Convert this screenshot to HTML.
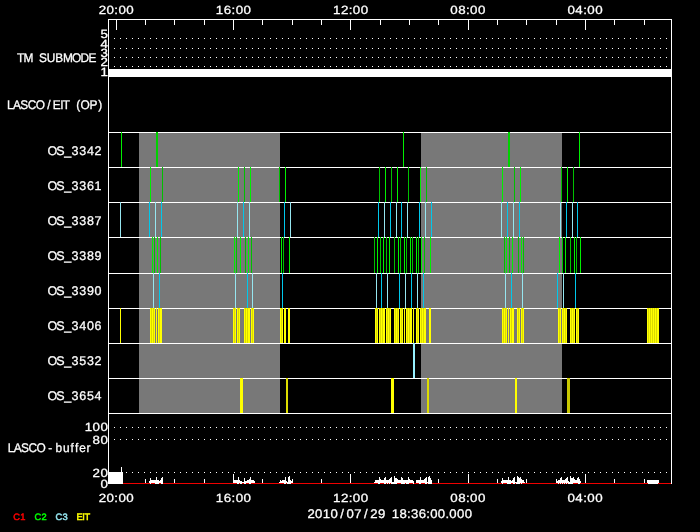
<!DOCTYPE html>
<html><head><meta charset="utf-8"><title>LASCO/EIT plan</title>
<style>
html,body{margin:0;padding:0;background:#000;}
svg{display:block;}
</style></head>
<body>
<svg width="700" height="532" viewBox="0 0 700 532" shape-rendering="crispEdges">
<rect x="0" y="0" width="700" height="532" fill="#000"/>
<rect x="139" y="132" width="141" height="281" fill="#787878"/>
<rect x="421" y="132" width="141" height="281" fill="#787878"/>
<rect x="108" y="132" width="564" height="1" fill="#fff"/>
<rect x="108" y="167" width="564" height="1" fill="#fff"/>
<rect x="108" y="202" width="564" height="1" fill="#fff"/>
<rect x="108" y="237" width="564" height="1" fill="#fff"/>
<rect x="108" y="273" width="564" height="1" fill="#fff"/>
<rect x="108" y="308" width="564" height="1" fill="#fff"/>
<rect x="108" y="343" width="564" height="1" fill="#fff"/>
<rect x="108" y="378" width="564" height="1" fill="#fff"/>
<rect x="108" y="413" width="564" height="1" fill="#fff"/>
<rect x="121" y="132" width="1" height="35" fill="#00f000"/>
<rect x="156" y="132" width="2" height="35" fill="#00d200"/>
<rect x="403" y="132" width="1" height="35" fill="#00f000"/>
<rect x="508" y="132" width="2" height="35" fill="#00d200"/>
<rect x="579" y="132" width="1" height="35" fill="#00f000"/>
<rect x="150" y="167" width="1" height="35" fill="#00f000"/>
<rect x="162" y="167" width="1" height="35" fill="#00c000"/>
<rect x="238" y="167" width="1" height="35" fill="#00f000"/>
<rect x="244" y="167" width="1" height="35" fill="#00c000"/>
<rect x="250" y="167" width="1" height="35" fill="#00f000"/>
<rect x="279" y="167" width="1" height="35" fill="#00c000"/>
<rect x="285" y="167" width="1" height="35" fill="#00f000"/>
<rect x="379" y="167" width="1" height="35" fill="#00c000"/>
<rect x="385" y="167" width="1" height="35" fill="#00f000"/>
<rect x="391" y="167" width="1" height="35" fill="#00c000"/>
<rect x="397" y="167" width="1" height="35" fill="#00f000"/>
<rect x="408" y="167" width="1" height="35" fill="#00c000"/>
<rect x="420" y="167" width="1" height="35" fill="#00f000"/>
<rect x="426" y="167" width="1" height="35" fill="#00c000"/>
<rect x="502" y="167" width="1" height="35" fill="#00f000"/>
<rect x="514" y="167" width="1" height="35" fill="#00c000"/>
<rect x="520" y="167" width="1" height="35" fill="#00f000"/>
<rect x="561" y="167" width="1" height="35" fill="#00c000"/>
<rect x="567" y="167" width="1" height="35" fill="#00f000"/>
<rect x="573" y="167" width="1" height="35" fill="#00c000"/>
<rect x="120" y="202" width="1" height="35" fill="#96e6f0"/>
<rect x="149" y="202" width="1" height="35" fill="#00c8eb"/>
<rect x="155" y="202" width="1" height="35" fill="#96e6f0"/>
<rect x="161" y="202" width="1" height="35" fill="#00c8eb"/>
<rect x="237" y="202" width="1" height="35" fill="#96e6f0"/>
<rect x="243" y="202" width="1" height="35" fill="#00c8eb"/>
<rect x="249" y="202" width="1" height="35" fill="#96e6f0"/>
<rect x="284" y="202" width="1" height="35" fill="#00c8eb"/>
<rect x="290" y="202" width="1" height="35" fill="#96e6f0"/>
<rect x="378" y="202" width="1" height="35" fill="#00c8eb"/>
<rect x="384" y="202" width="1" height="35" fill="#96e6f0"/>
<rect x="390" y="202" width="1" height="35" fill="#00c8eb"/>
<rect x="396" y="202" width="1" height="35" fill="#96e6f0"/>
<rect x="401" y="202" width="1" height="35" fill="#00c8eb"/>
<rect x="407" y="202" width="1" height="35" fill="#96e6f0"/>
<rect x="419" y="202" width="1" height="35" fill="#00c8eb"/>
<rect x="425" y="202" width="1" height="35" fill="#96e6f0"/>
<rect x="431" y="202" width="1" height="35" fill="#00c8eb"/>
<rect x="501" y="202" width="1" height="35" fill="#96e6f0"/>
<rect x="507" y="202" width="1" height="35" fill="#00c8eb"/>
<rect x="513" y="202" width="1" height="35" fill="#96e6f0"/>
<rect x="519" y="202" width="1" height="35" fill="#00c8eb"/>
<rect x="560" y="202" width="1" height="35" fill="#96e6f0"/>
<rect x="566" y="202" width="1" height="35" fill="#00c8eb"/>
<rect x="572" y="202" width="1" height="35" fill="#96e6f0"/>
<rect x="577" y="202" width="1" height="35" fill="#00c8eb"/>
<rect x="152" y="237" width="1" height="36" fill="#00f000"/>
<rect x="154" y="237" width="1" height="36" fill="#00c000"/>
<rect x="157" y="237" width="1" height="36" fill="#00f000"/>
<rect x="160" y="237" width="1" height="36" fill="#00c000"/>
<rect x="234" y="237" width="1" height="36" fill="#00f000"/>
<rect x="236" y="237" width="1" height="36" fill="#00c000"/>
<rect x="240" y="237" width="1" height="36" fill="#00f000"/>
<rect x="245" y="237" width="1" height="36" fill="#00c000"/>
<rect x="248" y="237" width="1" height="36" fill="#00f000"/>
<rect x="251" y="237" width="1" height="36" fill="#00c000"/>
<rect x="281" y="237" width="1" height="36" fill="#00f000"/>
<rect x="283" y="237" width="1" height="36" fill="#00c000"/>
<rect x="289" y="237" width="1" height="36" fill="#00f000"/>
<rect x="374" y="237" width="1" height="36" fill="#00c000"/>
<rect x="377" y="237" width="1" height="36" fill="#00f000"/>
<rect x="380" y="237" width="1" height="36" fill="#00c000"/>
<rect x="383" y="237" width="1" height="36" fill="#00f000"/>
<rect x="386" y="237" width="1" height="36" fill="#00c000"/>
<rect x="389" y="237" width="1" height="36" fill="#00f000"/>
<rect x="394" y="237" width="1" height="36" fill="#00c000"/>
<rect x="398" y="237" width="1" height="36" fill="#00f000"/>
<rect x="400" y="237" width="1" height="36" fill="#00c000"/>
<rect x="404" y="237" width="1" height="36" fill="#00f000"/>
<rect x="406" y="237" width="1" height="36" fill="#00c000"/>
<rect x="410" y="237" width="1" height="36" fill="#00f000"/>
<rect x="412" y="237" width="1" height="36" fill="#00c000"/>
<rect x="416" y="237" width="1" height="36" fill="#00f000"/>
<rect x="418" y="237" width="1" height="36" fill="#00c000"/>
<rect x="421" y="237" width="1" height="36" fill="#00f000"/>
<rect x="424" y="237" width="1" height="36" fill="#00c000"/>
<rect x="430" y="237" width="1" height="36" fill="#00f000"/>
<rect x="504" y="237" width="1" height="36" fill="#00c000"/>
<rect x="506" y="237" width="1" height="36" fill="#00f000"/>
<rect x="509" y="237" width="1" height="36" fill="#00c000"/>
<rect x="512" y="237" width="1" height="36" fill="#00f000"/>
<rect x="518" y="237" width="1" height="36" fill="#00c000"/>
<rect x="521" y="237" width="1" height="36" fill="#00f000"/>
<rect x="523" y="237" width="1" height="36" fill="#00c000"/>
<rect x="559" y="237" width="1" height="36" fill="#00f000"/>
<rect x="562" y="237" width="1" height="36" fill="#00c000"/>
<rect x="565" y="237" width="1" height="36" fill="#00f000"/>
<rect x="570" y="237" width="1" height="36" fill="#00c000"/>
<rect x="574" y="237" width="1" height="36" fill="#00f000"/>
<rect x="576" y="237" width="1" height="36" fill="#00c000"/>
<rect x="580" y="237" width="1" height="36" fill="#00f000"/>
<rect x="153" y="273" width="1" height="35" fill="#96e6f0"/>
<rect x="159" y="273" width="1" height="35" fill="#00c8eb"/>
<rect x="235" y="273" width="1" height="35" fill="#96e6f0"/>
<rect x="247" y="273" width="1" height="35" fill="#00c8eb"/>
<rect x="252" y="273" width="1" height="35" fill="#96e6f0"/>
<rect x="282" y="273" width="1" height="35" fill="#00c8eb"/>
<rect x="376" y="273" width="1" height="35" fill="#96e6f0"/>
<rect x="381" y="273" width="1" height="35" fill="#00c8eb"/>
<rect x="387" y="273" width="1" height="35" fill="#96e6f0"/>
<rect x="399" y="273" width="1" height="35" fill="#00c8eb"/>
<rect x="405" y="273" width="1" height="35" fill="#96e6f0"/>
<rect x="411" y="273" width="1" height="35" fill="#00c8eb"/>
<rect x="417" y="273" width="1" height="35" fill="#96e6f0"/>
<rect x="423" y="273" width="1" height="35" fill="#00c8eb"/>
<rect x="505" y="273" width="1" height="35" fill="#96e6f0"/>
<rect x="511" y="273" width="1" height="35" fill="#00c8eb"/>
<rect x="522" y="273" width="1" height="35" fill="#96e6f0"/>
<rect x="557" y="273" width="1" height="35" fill="#00c8eb"/>
<rect x="563" y="273" width="1" height="35" fill="#96e6f0"/>
<rect x="575" y="273" width="1" height="35" fill="#00c8eb"/>
<rect x="120" y="308" width="1" height="35" fill="#ffff00"/>
<rect x="150" y="308" width="5" height="35" fill="#ffff00"/>
<rect x="151" y="308" width="1" height="35" fill="#dada00"/>
<rect x="153" y="308" width="1" height="35" fill="#dada00"/>
<rect x="156" y="308" width="1" height="35" fill="#ffff00"/>
<rect x="158" y="308" width="4" height="35" fill="#ffff00"/>
<rect x="159" y="308" width="1" height="35" fill="#dada00"/>
<rect x="233" y="308" width="3" height="35" fill="#ffff00"/>
<rect x="234" y="308" width="1" height="35" fill="#dada00"/>
<rect x="237" y="308" width="3" height="35" fill="#ffff00"/>
<rect x="238" y="308" width="1" height="35" fill="#dada00"/>
<rect x="244" y="308" width="6" height="35" fill="#ffff00"/>
<rect x="245" y="308" width="1" height="35" fill="#dada00"/>
<rect x="247" y="308" width="1" height="35" fill="#dada00"/>
<rect x="251" y="308" width="3" height="35" fill="#ffff00"/>
<rect x="252" y="308" width="1" height="35" fill="#dada00"/>
<rect x="280" y="308" width="3" height="35" fill="#ffff00"/>
<rect x="281" y="308" width="1" height="35" fill="#dada00"/>
<rect x="284" y="308" width="2" height="35" fill="#ffff00"/>
<rect x="288" y="308" width="2" height="35" fill="#ffff00"/>
<rect x="375" y="308" width="3" height="35" fill="#ffff00"/>
<rect x="376" y="308" width="1" height="35" fill="#dada00"/>
<rect x="379" y="308" width="6" height="35" fill="#ffff00"/>
<rect x="380" y="308" width="1" height="35" fill="#dada00"/>
<rect x="382" y="308" width="1" height="35" fill="#dada00"/>
<rect x="386" y="308" width="5" height="35" fill="#ffff00"/>
<rect x="387" y="308" width="1" height="35" fill="#dada00"/>
<rect x="389" y="308" width="1" height="35" fill="#dada00"/>
<rect x="394" y="308" width="5" height="35" fill="#ffff00"/>
<rect x="395" y="308" width="1" height="35" fill="#dada00"/>
<rect x="397" y="308" width="1" height="35" fill="#dada00"/>
<rect x="400" y="308" width="3" height="35" fill="#ffff00"/>
<rect x="401" y="308" width="1" height="35" fill="#dada00"/>
<rect x="404" y="308" width="1" height="35" fill="#ffff00"/>
<rect x="406" y="308" width="6" height="35" fill="#ffff00"/>
<rect x="407" y="308" width="1" height="35" fill="#dada00"/>
<rect x="409" y="308" width="1" height="35" fill="#dada00"/>
<rect x="413" y="308" width="1" height="35" fill="#ffff00"/>
<rect x="416" y="308" width="3" height="35" fill="#ffff00"/>
<rect x="417" y="308" width="1" height="35" fill="#dada00"/>
<rect x="420" y="308" width="6" height="35" fill="#ffff00"/>
<rect x="421" y="308" width="1" height="35" fill="#dada00"/>
<rect x="423" y="308" width="1" height="35" fill="#dada00"/>
<rect x="429" y="308" width="2" height="35" fill="#ffff00"/>
<rect x="502" y="308" width="5" height="35" fill="#ffff00"/>
<rect x="503" y="308" width="1" height="35" fill="#dada00"/>
<rect x="505" y="308" width="1" height="35" fill="#dada00"/>
<rect x="508" y="308" width="1" height="35" fill="#ffff00"/>
<rect x="510" y="308" width="4" height="35" fill="#ffff00"/>
<rect x="511" y="308" width="1" height="35" fill="#dada00"/>
<rect x="517" y="308" width="3" height="35" fill="#ffff00"/>
<rect x="518" y="308" width="1" height="35" fill="#dada00"/>
<rect x="521" y="308" width="3" height="35" fill="#ffff00"/>
<rect x="522" y="308" width="1" height="35" fill="#dada00"/>
<rect x="558" y="308" width="3" height="35" fill="#ffff00"/>
<rect x="559" y="308" width="1" height="35" fill="#dada00"/>
<rect x="562" y="308" width="5" height="35" fill="#ffff00"/>
<rect x="563" y="308" width="1" height="35" fill="#dada00"/>
<rect x="565" y="308" width="1" height="35" fill="#dada00"/>
<rect x="570" y="308" width="5" height="35" fill="#ffff00"/>
<rect x="571" y="308" width="1" height="35" fill="#dada00"/>
<rect x="573" y="308" width="1" height="35" fill="#dada00"/>
<rect x="576" y="308" width="3" height="35" fill="#ffff00"/>
<rect x="577" y="308" width="1" height="35" fill="#dada00"/>
<rect x="647" y="308" width="12" height="35" fill="#ffff00"/>
<rect x="648" y="308" width="1" height="35" fill="#dada00"/>
<rect x="650" y="308" width="1" height="35" fill="#dada00"/>
<rect x="652" y="308" width="1" height="35" fill="#dada00"/>
<rect x="654" y="308" width="1" height="35" fill="#dada00"/>
<rect x="656" y="308" width="1" height="35" fill="#dada00"/>
<rect x="413" y="343" width="2" height="35" fill="#96f0ff"/>
<rect x="240" y="378" width="3" height="35" fill="#ffff00"/>
<rect x="286" y="378" width="2" height="35" fill="#dcdc00"/>
<rect x="391" y="378" width="3" height="35" fill="#ffff00"/>
<rect x="427" y="378" width="2" height="35" fill="#dcdc00"/>
<rect x="515" y="378" width="2" height="35" fill="#ffff00"/>
<rect x="567" y="378" width="3" height="35" fill="#c8c800"/>
<rect x="114" y="38" width="1" height="1" fill="#fff"/>
<rect x="120" y="38" width="1" height="1" fill="#fff"/>
<rect x="126" y="38" width="1" height="1" fill="#fff"/>
<rect x="132" y="38" width="1" height="1" fill="#fff"/>
<rect x="138" y="38" width="1" height="1" fill="#fff"/>
<rect x="144" y="38" width="1" height="1" fill="#fff"/>
<rect x="150" y="38" width="1" height="1" fill="#fff"/>
<rect x="156" y="38" width="1" height="1" fill="#fff"/>
<rect x="162" y="38" width="1" height="1" fill="#fff"/>
<rect x="168" y="38" width="1" height="1" fill="#fff"/>
<rect x="174" y="38" width="1" height="1" fill="#fff"/>
<rect x="180" y="38" width="1" height="1" fill="#fff"/>
<rect x="186" y="38" width="1" height="1" fill="#fff"/>
<rect x="192" y="38" width="1" height="1" fill="#fff"/>
<rect x="198" y="38" width="1" height="1" fill="#fff"/>
<rect x="204" y="38" width="1" height="1" fill="#fff"/>
<rect x="210" y="38" width="1" height="1" fill="#fff"/>
<rect x="216" y="38" width="1" height="1" fill="#fff"/>
<rect x="222" y="38" width="1" height="1" fill="#fff"/>
<rect x="228" y="38" width="1" height="1" fill="#fff"/>
<rect x="234" y="38" width="1" height="1" fill="#fff"/>
<rect x="240" y="38" width="1" height="1" fill="#fff"/>
<rect x="246" y="38" width="1" height="1" fill="#fff"/>
<rect x="252" y="38" width="1" height="1" fill="#fff"/>
<rect x="258" y="38" width="1" height="1" fill="#fff"/>
<rect x="264" y="38" width="1" height="1" fill="#fff"/>
<rect x="270" y="38" width="1" height="1" fill="#fff"/>
<rect x="276" y="38" width="1" height="1" fill="#fff"/>
<rect x="282" y="38" width="1" height="1" fill="#fff"/>
<rect x="288" y="38" width="1" height="1" fill="#fff"/>
<rect x="294" y="38" width="1" height="1" fill="#fff"/>
<rect x="300" y="38" width="1" height="1" fill="#fff"/>
<rect x="306" y="38" width="1" height="1" fill="#fff"/>
<rect x="312" y="38" width="1" height="1" fill="#fff"/>
<rect x="318" y="38" width="1" height="1" fill="#fff"/>
<rect x="324" y="38" width="1" height="1" fill="#fff"/>
<rect x="330" y="38" width="1" height="1" fill="#fff"/>
<rect x="336" y="38" width="1" height="1" fill="#fff"/>
<rect x="342" y="38" width="1" height="1" fill="#fff"/>
<rect x="348" y="38" width="1" height="1" fill="#fff"/>
<rect x="354" y="38" width="1" height="1" fill="#fff"/>
<rect x="360" y="38" width="1" height="1" fill="#fff"/>
<rect x="366" y="38" width="1" height="1" fill="#fff"/>
<rect x="372" y="38" width="1" height="1" fill="#fff"/>
<rect x="378" y="38" width="1" height="1" fill="#fff"/>
<rect x="384" y="38" width="1" height="1" fill="#fff"/>
<rect x="390" y="38" width="1" height="1" fill="#fff"/>
<rect x="396" y="38" width="1" height="1" fill="#fff"/>
<rect x="402" y="38" width="1" height="1" fill="#fff"/>
<rect x="408" y="38" width="1" height="1" fill="#fff"/>
<rect x="414" y="38" width="1" height="1" fill="#fff"/>
<rect x="420" y="38" width="1" height="1" fill="#fff"/>
<rect x="426" y="38" width="1" height="1" fill="#fff"/>
<rect x="432" y="38" width="1" height="1" fill="#fff"/>
<rect x="438" y="38" width="1" height="1" fill="#fff"/>
<rect x="444" y="38" width="1" height="1" fill="#fff"/>
<rect x="450" y="38" width="1" height="1" fill="#fff"/>
<rect x="456" y="38" width="1" height="1" fill="#fff"/>
<rect x="462" y="38" width="1" height="1" fill="#fff"/>
<rect x="468" y="38" width="1" height="1" fill="#fff"/>
<rect x="474" y="38" width="1" height="1" fill="#fff"/>
<rect x="480" y="38" width="1" height="1" fill="#fff"/>
<rect x="486" y="38" width="1" height="1" fill="#fff"/>
<rect x="492" y="38" width="1" height="1" fill="#fff"/>
<rect x="498" y="38" width="1" height="1" fill="#fff"/>
<rect x="504" y="38" width="1" height="1" fill="#fff"/>
<rect x="510" y="38" width="1" height="1" fill="#fff"/>
<rect x="516" y="38" width="1" height="1" fill="#fff"/>
<rect x="522" y="38" width="1" height="1" fill="#fff"/>
<rect x="528" y="38" width="1" height="1" fill="#fff"/>
<rect x="534" y="38" width="1" height="1" fill="#fff"/>
<rect x="540" y="38" width="1" height="1" fill="#fff"/>
<rect x="546" y="38" width="1" height="1" fill="#fff"/>
<rect x="552" y="38" width="1" height="1" fill="#fff"/>
<rect x="558" y="38" width="1" height="1" fill="#fff"/>
<rect x="564" y="38" width="1" height="1" fill="#fff"/>
<rect x="570" y="38" width="1" height="1" fill="#fff"/>
<rect x="576" y="38" width="1" height="1" fill="#fff"/>
<rect x="582" y="38" width="1" height="1" fill="#fff"/>
<rect x="588" y="38" width="1" height="1" fill="#fff"/>
<rect x="594" y="38" width="1" height="1" fill="#fff"/>
<rect x="600" y="38" width="1" height="1" fill="#fff"/>
<rect x="606" y="38" width="1" height="1" fill="#fff"/>
<rect x="612" y="38" width="1" height="1" fill="#fff"/>
<rect x="618" y="38" width="1" height="1" fill="#fff"/>
<rect x="624" y="38" width="1" height="1" fill="#fff"/>
<rect x="630" y="38" width="1" height="1" fill="#fff"/>
<rect x="636" y="38" width="1" height="1" fill="#fff"/>
<rect x="642" y="38" width="1" height="1" fill="#fff"/>
<rect x="648" y="38" width="1" height="1" fill="#fff"/>
<rect x="654" y="38" width="1" height="1" fill="#fff"/>
<rect x="660" y="38" width="1" height="1" fill="#fff"/>
<rect x="666" y="38" width="1" height="1" fill="#fff"/>
<rect x="114" y="48" width="1" height="1" fill="#fff"/>
<rect x="120" y="48" width="1" height="1" fill="#fff"/>
<rect x="126" y="48" width="1" height="1" fill="#fff"/>
<rect x="132" y="48" width="1" height="1" fill="#fff"/>
<rect x="138" y="48" width="1" height="1" fill="#fff"/>
<rect x="144" y="48" width="1" height="1" fill="#fff"/>
<rect x="150" y="48" width="1" height="1" fill="#fff"/>
<rect x="156" y="48" width="1" height="1" fill="#fff"/>
<rect x="162" y="48" width="1" height="1" fill="#fff"/>
<rect x="168" y="48" width="1" height="1" fill="#fff"/>
<rect x="174" y="48" width="1" height="1" fill="#fff"/>
<rect x="180" y="48" width="1" height="1" fill="#fff"/>
<rect x="186" y="48" width="1" height="1" fill="#fff"/>
<rect x="192" y="48" width="1" height="1" fill="#fff"/>
<rect x="198" y="48" width="1" height="1" fill="#fff"/>
<rect x="204" y="48" width="1" height="1" fill="#fff"/>
<rect x="210" y="48" width="1" height="1" fill="#fff"/>
<rect x="216" y="48" width="1" height="1" fill="#fff"/>
<rect x="222" y="48" width="1" height="1" fill="#fff"/>
<rect x="228" y="48" width="1" height="1" fill="#fff"/>
<rect x="234" y="48" width="1" height="1" fill="#fff"/>
<rect x="240" y="48" width="1" height="1" fill="#fff"/>
<rect x="246" y="48" width="1" height="1" fill="#fff"/>
<rect x="252" y="48" width="1" height="1" fill="#fff"/>
<rect x="258" y="48" width="1" height="1" fill="#fff"/>
<rect x="264" y="48" width="1" height="1" fill="#fff"/>
<rect x="270" y="48" width="1" height="1" fill="#fff"/>
<rect x="276" y="48" width="1" height="1" fill="#fff"/>
<rect x="282" y="48" width="1" height="1" fill="#fff"/>
<rect x="288" y="48" width="1" height="1" fill="#fff"/>
<rect x="294" y="48" width="1" height="1" fill="#fff"/>
<rect x="300" y="48" width="1" height="1" fill="#fff"/>
<rect x="306" y="48" width="1" height="1" fill="#fff"/>
<rect x="312" y="48" width="1" height="1" fill="#fff"/>
<rect x="318" y="48" width="1" height="1" fill="#fff"/>
<rect x="324" y="48" width="1" height="1" fill="#fff"/>
<rect x="330" y="48" width="1" height="1" fill="#fff"/>
<rect x="336" y="48" width="1" height="1" fill="#fff"/>
<rect x="342" y="48" width="1" height="1" fill="#fff"/>
<rect x="348" y="48" width="1" height="1" fill="#fff"/>
<rect x="354" y="48" width="1" height="1" fill="#fff"/>
<rect x="360" y="48" width="1" height="1" fill="#fff"/>
<rect x="366" y="48" width="1" height="1" fill="#fff"/>
<rect x="372" y="48" width="1" height="1" fill="#fff"/>
<rect x="378" y="48" width="1" height="1" fill="#fff"/>
<rect x="384" y="48" width="1" height="1" fill="#fff"/>
<rect x="390" y="48" width="1" height="1" fill="#fff"/>
<rect x="396" y="48" width="1" height="1" fill="#fff"/>
<rect x="402" y="48" width="1" height="1" fill="#fff"/>
<rect x="408" y="48" width="1" height="1" fill="#fff"/>
<rect x="414" y="48" width="1" height="1" fill="#fff"/>
<rect x="420" y="48" width="1" height="1" fill="#fff"/>
<rect x="426" y="48" width="1" height="1" fill="#fff"/>
<rect x="432" y="48" width="1" height="1" fill="#fff"/>
<rect x="438" y="48" width="1" height="1" fill="#fff"/>
<rect x="444" y="48" width="1" height="1" fill="#fff"/>
<rect x="450" y="48" width="1" height="1" fill="#fff"/>
<rect x="456" y="48" width="1" height="1" fill="#fff"/>
<rect x="462" y="48" width="1" height="1" fill="#fff"/>
<rect x="468" y="48" width="1" height="1" fill="#fff"/>
<rect x="474" y="48" width="1" height="1" fill="#fff"/>
<rect x="480" y="48" width="1" height="1" fill="#fff"/>
<rect x="486" y="48" width="1" height="1" fill="#fff"/>
<rect x="492" y="48" width="1" height="1" fill="#fff"/>
<rect x="498" y="48" width="1" height="1" fill="#fff"/>
<rect x="504" y="48" width="1" height="1" fill="#fff"/>
<rect x="510" y="48" width="1" height="1" fill="#fff"/>
<rect x="516" y="48" width="1" height="1" fill="#fff"/>
<rect x="522" y="48" width="1" height="1" fill="#fff"/>
<rect x="528" y="48" width="1" height="1" fill="#fff"/>
<rect x="534" y="48" width="1" height="1" fill="#fff"/>
<rect x="540" y="48" width="1" height="1" fill="#fff"/>
<rect x="546" y="48" width="1" height="1" fill="#fff"/>
<rect x="552" y="48" width="1" height="1" fill="#fff"/>
<rect x="558" y="48" width="1" height="1" fill="#fff"/>
<rect x="564" y="48" width="1" height="1" fill="#fff"/>
<rect x="570" y="48" width="1" height="1" fill="#fff"/>
<rect x="576" y="48" width="1" height="1" fill="#fff"/>
<rect x="582" y="48" width="1" height="1" fill="#fff"/>
<rect x="588" y="48" width="1" height="1" fill="#fff"/>
<rect x="594" y="48" width="1" height="1" fill="#fff"/>
<rect x="600" y="48" width="1" height="1" fill="#fff"/>
<rect x="606" y="48" width="1" height="1" fill="#fff"/>
<rect x="612" y="48" width="1" height="1" fill="#fff"/>
<rect x="618" y="48" width="1" height="1" fill="#fff"/>
<rect x="624" y="48" width="1" height="1" fill="#fff"/>
<rect x="630" y="48" width="1" height="1" fill="#fff"/>
<rect x="636" y="48" width="1" height="1" fill="#fff"/>
<rect x="642" y="48" width="1" height="1" fill="#fff"/>
<rect x="648" y="48" width="1" height="1" fill="#fff"/>
<rect x="654" y="48" width="1" height="1" fill="#fff"/>
<rect x="660" y="48" width="1" height="1" fill="#fff"/>
<rect x="666" y="48" width="1" height="1" fill="#fff"/>
<rect x="114" y="57" width="1" height="1" fill="#fff"/>
<rect x="120" y="57" width="1" height="1" fill="#fff"/>
<rect x="126" y="57" width="1" height="1" fill="#fff"/>
<rect x="132" y="57" width="1" height="1" fill="#fff"/>
<rect x="138" y="57" width="1" height="1" fill="#fff"/>
<rect x="144" y="57" width="1" height="1" fill="#fff"/>
<rect x="150" y="57" width="1" height="1" fill="#fff"/>
<rect x="156" y="57" width="1" height="1" fill="#fff"/>
<rect x="162" y="57" width="1" height="1" fill="#fff"/>
<rect x="168" y="57" width="1" height="1" fill="#fff"/>
<rect x="174" y="57" width="1" height="1" fill="#fff"/>
<rect x="180" y="57" width="1" height="1" fill="#fff"/>
<rect x="186" y="57" width="1" height="1" fill="#fff"/>
<rect x="192" y="57" width="1" height="1" fill="#fff"/>
<rect x="198" y="57" width="1" height="1" fill="#fff"/>
<rect x="204" y="57" width="1" height="1" fill="#fff"/>
<rect x="210" y="57" width="1" height="1" fill="#fff"/>
<rect x="216" y="57" width="1" height="1" fill="#fff"/>
<rect x="222" y="57" width="1" height="1" fill="#fff"/>
<rect x="228" y="57" width="1" height="1" fill="#fff"/>
<rect x="234" y="57" width="1" height="1" fill="#fff"/>
<rect x="240" y="57" width="1" height="1" fill="#fff"/>
<rect x="246" y="57" width="1" height="1" fill="#fff"/>
<rect x="252" y="57" width="1" height="1" fill="#fff"/>
<rect x="258" y="57" width="1" height="1" fill="#fff"/>
<rect x="264" y="57" width="1" height="1" fill="#fff"/>
<rect x="270" y="57" width="1" height="1" fill="#fff"/>
<rect x="276" y="57" width="1" height="1" fill="#fff"/>
<rect x="282" y="57" width="1" height="1" fill="#fff"/>
<rect x="288" y="57" width="1" height="1" fill="#fff"/>
<rect x="294" y="57" width="1" height="1" fill="#fff"/>
<rect x="300" y="57" width="1" height="1" fill="#fff"/>
<rect x="306" y="57" width="1" height="1" fill="#fff"/>
<rect x="312" y="57" width="1" height="1" fill="#fff"/>
<rect x="318" y="57" width="1" height="1" fill="#fff"/>
<rect x="324" y="57" width="1" height="1" fill="#fff"/>
<rect x="330" y="57" width="1" height="1" fill="#fff"/>
<rect x="336" y="57" width="1" height="1" fill="#fff"/>
<rect x="342" y="57" width="1" height="1" fill="#fff"/>
<rect x="348" y="57" width="1" height="1" fill="#fff"/>
<rect x="354" y="57" width="1" height="1" fill="#fff"/>
<rect x="360" y="57" width="1" height="1" fill="#fff"/>
<rect x="366" y="57" width="1" height="1" fill="#fff"/>
<rect x="372" y="57" width="1" height="1" fill="#fff"/>
<rect x="378" y="57" width="1" height="1" fill="#fff"/>
<rect x="384" y="57" width="1" height="1" fill="#fff"/>
<rect x="390" y="57" width="1" height="1" fill="#fff"/>
<rect x="396" y="57" width="1" height="1" fill="#fff"/>
<rect x="402" y="57" width="1" height="1" fill="#fff"/>
<rect x="408" y="57" width="1" height="1" fill="#fff"/>
<rect x="414" y="57" width="1" height="1" fill="#fff"/>
<rect x="420" y="57" width="1" height="1" fill="#fff"/>
<rect x="426" y="57" width="1" height="1" fill="#fff"/>
<rect x="432" y="57" width="1" height="1" fill="#fff"/>
<rect x="438" y="57" width="1" height="1" fill="#fff"/>
<rect x="444" y="57" width="1" height="1" fill="#fff"/>
<rect x="450" y="57" width="1" height="1" fill="#fff"/>
<rect x="456" y="57" width="1" height="1" fill="#fff"/>
<rect x="462" y="57" width="1" height="1" fill="#fff"/>
<rect x="468" y="57" width="1" height="1" fill="#fff"/>
<rect x="474" y="57" width="1" height="1" fill="#fff"/>
<rect x="480" y="57" width="1" height="1" fill="#fff"/>
<rect x="486" y="57" width="1" height="1" fill="#fff"/>
<rect x="492" y="57" width="1" height="1" fill="#fff"/>
<rect x="498" y="57" width="1" height="1" fill="#fff"/>
<rect x="504" y="57" width="1" height="1" fill="#fff"/>
<rect x="510" y="57" width="1" height="1" fill="#fff"/>
<rect x="516" y="57" width="1" height="1" fill="#fff"/>
<rect x="522" y="57" width="1" height="1" fill="#fff"/>
<rect x="528" y="57" width="1" height="1" fill="#fff"/>
<rect x="534" y="57" width="1" height="1" fill="#fff"/>
<rect x="540" y="57" width="1" height="1" fill="#fff"/>
<rect x="546" y="57" width="1" height="1" fill="#fff"/>
<rect x="552" y="57" width="1" height="1" fill="#fff"/>
<rect x="558" y="57" width="1" height="1" fill="#fff"/>
<rect x="564" y="57" width="1" height="1" fill="#fff"/>
<rect x="570" y="57" width="1" height="1" fill="#fff"/>
<rect x="576" y="57" width="1" height="1" fill="#fff"/>
<rect x="582" y="57" width="1" height="1" fill="#fff"/>
<rect x="588" y="57" width="1" height="1" fill="#fff"/>
<rect x="594" y="57" width="1" height="1" fill="#fff"/>
<rect x="600" y="57" width="1" height="1" fill="#fff"/>
<rect x="606" y="57" width="1" height="1" fill="#fff"/>
<rect x="612" y="57" width="1" height="1" fill="#fff"/>
<rect x="618" y="57" width="1" height="1" fill="#fff"/>
<rect x="624" y="57" width="1" height="1" fill="#fff"/>
<rect x="630" y="57" width="1" height="1" fill="#fff"/>
<rect x="636" y="57" width="1" height="1" fill="#fff"/>
<rect x="642" y="57" width="1" height="1" fill="#fff"/>
<rect x="648" y="57" width="1" height="1" fill="#fff"/>
<rect x="654" y="57" width="1" height="1" fill="#fff"/>
<rect x="660" y="57" width="1" height="1" fill="#fff"/>
<rect x="666" y="57" width="1" height="1" fill="#fff"/>
<rect x="114" y="66" width="1" height="1" fill="#fff"/>
<rect x="120" y="66" width="1" height="1" fill="#fff"/>
<rect x="126" y="66" width="1" height="1" fill="#fff"/>
<rect x="132" y="66" width="1" height="1" fill="#fff"/>
<rect x="138" y="66" width="1" height="1" fill="#fff"/>
<rect x="144" y="66" width="1" height="1" fill="#fff"/>
<rect x="150" y="66" width="1" height="1" fill="#fff"/>
<rect x="156" y="66" width="1" height="1" fill="#fff"/>
<rect x="162" y="66" width="1" height="1" fill="#fff"/>
<rect x="168" y="66" width="1" height="1" fill="#fff"/>
<rect x="174" y="66" width="1" height="1" fill="#fff"/>
<rect x="180" y="66" width="1" height="1" fill="#fff"/>
<rect x="186" y="66" width="1" height="1" fill="#fff"/>
<rect x="192" y="66" width="1" height="1" fill="#fff"/>
<rect x="198" y="66" width="1" height="1" fill="#fff"/>
<rect x="204" y="66" width="1" height="1" fill="#fff"/>
<rect x="210" y="66" width="1" height="1" fill="#fff"/>
<rect x="216" y="66" width="1" height="1" fill="#fff"/>
<rect x="222" y="66" width="1" height="1" fill="#fff"/>
<rect x="228" y="66" width="1" height="1" fill="#fff"/>
<rect x="234" y="66" width="1" height="1" fill="#fff"/>
<rect x="240" y="66" width="1" height="1" fill="#fff"/>
<rect x="246" y="66" width="1" height="1" fill="#fff"/>
<rect x="252" y="66" width="1" height="1" fill="#fff"/>
<rect x="258" y="66" width="1" height="1" fill="#fff"/>
<rect x="264" y="66" width="1" height="1" fill="#fff"/>
<rect x="270" y="66" width="1" height="1" fill="#fff"/>
<rect x="276" y="66" width="1" height="1" fill="#fff"/>
<rect x="282" y="66" width="1" height="1" fill="#fff"/>
<rect x="288" y="66" width="1" height="1" fill="#fff"/>
<rect x="294" y="66" width="1" height="1" fill="#fff"/>
<rect x="300" y="66" width="1" height="1" fill="#fff"/>
<rect x="306" y="66" width="1" height="1" fill="#fff"/>
<rect x="312" y="66" width="1" height="1" fill="#fff"/>
<rect x="318" y="66" width="1" height="1" fill="#fff"/>
<rect x="324" y="66" width="1" height="1" fill="#fff"/>
<rect x="330" y="66" width="1" height="1" fill="#fff"/>
<rect x="336" y="66" width="1" height="1" fill="#fff"/>
<rect x="342" y="66" width="1" height="1" fill="#fff"/>
<rect x="348" y="66" width="1" height="1" fill="#fff"/>
<rect x="354" y="66" width="1" height="1" fill="#fff"/>
<rect x="360" y="66" width="1" height="1" fill="#fff"/>
<rect x="366" y="66" width="1" height="1" fill="#fff"/>
<rect x="372" y="66" width="1" height="1" fill="#fff"/>
<rect x="378" y="66" width="1" height="1" fill="#fff"/>
<rect x="384" y="66" width="1" height="1" fill="#fff"/>
<rect x="390" y="66" width="1" height="1" fill="#fff"/>
<rect x="396" y="66" width="1" height="1" fill="#fff"/>
<rect x="402" y="66" width="1" height="1" fill="#fff"/>
<rect x="408" y="66" width="1" height="1" fill="#fff"/>
<rect x="414" y="66" width="1" height="1" fill="#fff"/>
<rect x="420" y="66" width="1" height="1" fill="#fff"/>
<rect x="426" y="66" width="1" height="1" fill="#fff"/>
<rect x="432" y="66" width="1" height="1" fill="#fff"/>
<rect x="438" y="66" width="1" height="1" fill="#fff"/>
<rect x="444" y="66" width="1" height="1" fill="#fff"/>
<rect x="450" y="66" width="1" height="1" fill="#fff"/>
<rect x="456" y="66" width="1" height="1" fill="#fff"/>
<rect x="462" y="66" width="1" height="1" fill="#fff"/>
<rect x="468" y="66" width="1" height="1" fill="#fff"/>
<rect x="474" y="66" width="1" height="1" fill="#fff"/>
<rect x="480" y="66" width="1" height="1" fill="#fff"/>
<rect x="486" y="66" width="1" height="1" fill="#fff"/>
<rect x="492" y="66" width="1" height="1" fill="#fff"/>
<rect x="498" y="66" width="1" height="1" fill="#fff"/>
<rect x="504" y="66" width="1" height="1" fill="#fff"/>
<rect x="510" y="66" width="1" height="1" fill="#fff"/>
<rect x="516" y="66" width="1" height="1" fill="#fff"/>
<rect x="522" y="66" width="1" height="1" fill="#fff"/>
<rect x="528" y="66" width="1" height="1" fill="#fff"/>
<rect x="534" y="66" width="1" height="1" fill="#fff"/>
<rect x="540" y="66" width="1" height="1" fill="#fff"/>
<rect x="546" y="66" width="1" height="1" fill="#fff"/>
<rect x="552" y="66" width="1" height="1" fill="#fff"/>
<rect x="558" y="66" width="1" height="1" fill="#fff"/>
<rect x="564" y="66" width="1" height="1" fill="#fff"/>
<rect x="570" y="66" width="1" height="1" fill="#fff"/>
<rect x="576" y="66" width="1" height="1" fill="#fff"/>
<rect x="582" y="66" width="1" height="1" fill="#fff"/>
<rect x="588" y="66" width="1" height="1" fill="#fff"/>
<rect x="594" y="66" width="1" height="1" fill="#fff"/>
<rect x="600" y="66" width="1" height="1" fill="#fff"/>
<rect x="606" y="66" width="1" height="1" fill="#fff"/>
<rect x="612" y="66" width="1" height="1" fill="#fff"/>
<rect x="618" y="66" width="1" height="1" fill="#fff"/>
<rect x="624" y="66" width="1" height="1" fill="#fff"/>
<rect x="630" y="66" width="1" height="1" fill="#fff"/>
<rect x="636" y="66" width="1" height="1" fill="#fff"/>
<rect x="642" y="66" width="1" height="1" fill="#fff"/>
<rect x="648" y="66" width="1" height="1" fill="#fff"/>
<rect x="654" y="66" width="1" height="1" fill="#fff"/>
<rect x="660" y="66" width="1" height="1" fill="#fff"/>
<rect x="666" y="66" width="1" height="1" fill="#fff"/>
<rect x="108" y="69" width="564" height="8" fill="#fff"/>
<rect x="114" y="427" width="1" height="1" fill="#fff"/>
<rect x="120" y="427" width="1" height="1" fill="#fff"/>
<rect x="126" y="427" width="1" height="1" fill="#fff"/>
<rect x="132" y="427" width="1" height="1" fill="#fff"/>
<rect x="138" y="427" width="1" height="1" fill="#fff"/>
<rect x="144" y="427" width="1" height="1" fill="#fff"/>
<rect x="150" y="427" width="1" height="1" fill="#fff"/>
<rect x="156" y="427" width="1" height="1" fill="#fff"/>
<rect x="162" y="427" width="1" height="1" fill="#fff"/>
<rect x="168" y="427" width="1" height="1" fill="#fff"/>
<rect x="174" y="427" width="1" height="1" fill="#fff"/>
<rect x="180" y="427" width="1" height="1" fill="#fff"/>
<rect x="186" y="427" width="1" height="1" fill="#fff"/>
<rect x="192" y="427" width="1" height="1" fill="#fff"/>
<rect x="198" y="427" width="1" height="1" fill="#fff"/>
<rect x="204" y="427" width="1" height="1" fill="#fff"/>
<rect x="210" y="427" width="1" height="1" fill="#fff"/>
<rect x="216" y="427" width="1" height="1" fill="#fff"/>
<rect x="222" y="427" width="1" height="1" fill="#fff"/>
<rect x="228" y="427" width="1" height="1" fill="#fff"/>
<rect x="234" y="427" width="1" height="1" fill="#fff"/>
<rect x="240" y="427" width="1" height="1" fill="#fff"/>
<rect x="246" y="427" width="1" height="1" fill="#fff"/>
<rect x="252" y="427" width="1" height="1" fill="#fff"/>
<rect x="258" y="427" width="1" height="1" fill="#fff"/>
<rect x="264" y="427" width="1" height="1" fill="#fff"/>
<rect x="270" y="427" width="1" height="1" fill="#fff"/>
<rect x="276" y="427" width="1" height="1" fill="#fff"/>
<rect x="282" y="427" width="1" height="1" fill="#fff"/>
<rect x="288" y="427" width="1" height="1" fill="#fff"/>
<rect x="294" y="427" width="1" height="1" fill="#fff"/>
<rect x="300" y="427" width="1" height="1" fill="#fff"/>
<rect x="306" y="427" width="1" height="1" fill="#fff"/>
<rect x="312" y="427" width="1" height="1" fill="#fff"/>
<rect x="318" y="427" width="1" height="1" fill="#fff"/>
<rect x="324" y="427" width="1" height="1" fill="#fff"/>
<rect x="330" y="427" width="1" height="1" fill="#fff"/>
<rect x="336" y="427" width="1" height="1" fill="#fff"/>
<rect x="342" y="427" width="1" height="1" fill="#fff"/>
<rect x="348" y="427" width="1" height="1" fill="#fff"/>
<rect x="354" y="427" width="1" height="1" fill="#fff"/>
<rect x="360" y="427" width="1" height="1" fill="#fff"/>
<rect x="366" y="427" width="1" height="1" fill="#fff"/>
<rect x="372" y="427" width="1" height="1" fill="#fff"/>
<rect x="378" y="427" width="1" height="1" fill="#fff"/>
<rect x="384" y="427" width="1" height="1" fill="#fff"/>
<rect x="390" y="427" width="1" height="1" fill="#fff"/>
<rect x="396" y="427" width="1" height="1" fill="#fff"/>
<rect x="402" y="427" width="1" height="1" fill="#fff"/>
<rect x="408" y="427" width="1" height="1" fill="#fff"/>
<rect x="414" y="427" width="1" height="1" fill="#fff"/>
<rect x="420" y="427" width="1" height="1" fill="#fff"/>
<rect x="426" y="427" width="1" height="1" fill="#fff"/>
<rect x="432" y="427" width="1" height="1" fill="#fff"/>
<rect x="438" y="427" width="1" height="1" fill="#fff"/>
<rect x="444" y="427" width="1" height="1" fill="#fff"/>
<rect x="450" y="427" width="1" height="1" fill="#fff"/>
<rect x="456" y="427" width="1" height="1" fill="#fff"/>
<rect x="462" y="427" width="1" height="1" fill="#fff"/>
<rect x="468" y="427" width="1" height="1" fill="#fff"/>
<rect x="474" y="427" width="1" height="1" fill="#fff"/>
<rect x="480" y="427" width="1" height="1" fill="#fff"/>
<rect x="486" y="427" width="1" height="1" fill="#fff"/>
<rect x="492" y="427" width="1" height="1" fill="#fff"/>
<rect x="498" y="427" width="1" height="1" fill="#fff"/>
<rect x="504" y="427" width="1" height="1" fill="#fff"/>
<rect x="510" y="427" width="1" height="1" fill="#fff"/>
<rect x="516" y="427" width="1" height="1" fill="#fff"/>
<rect x="522" y="427" width="1" height="1" fill="#fff"/>
<rect x="528" y="427" width="1" height="1" fill="#fff"/>
<rect x="534" y="427" width="1" height="1" fill="#fff"/>
<rect x="540" y="427" width="1" height="1" fill="#fff"/>
<rect x="546" y="427" width="1" height="1" fill="#fff"/>
<rect x="552" y="427" width="1" height="1" fill="#fff"/>
<rect x="558" y="427" width="1" height="1" fill="#fff"/>
<rect x="564" y="427" width="1" height="1" fill="#fff"/>
<rect x="570" y="427" width="1" height="1" fill="#fff"/>
<rect x="576" y="427" width="1" height="1" fill="#fff"/>
<rect x="582" y="427" width="1" height="1" fill="#fff"/>
<rect x="588" y="427" width="1" height="1" fill="#fff"/>
<rect x="594" y="427" width="1" height="1" fill="#fff"/>
<rect x="600" y="427" width="1" height="1" fill="#fff"/>
<rect x="606" y="427" width="1" height="1" fill="#fff"/>
<rect x="612" y="427" width="1" height="1" fill="#fff"/>
<rect x="618" y="427" width="1" height="1" fill="#fff"/>
<rect x="624" y="427" width="1" height="1" fill="#fff"/>
<rect x="630" y="427" width="1" height="1" fill="#fff"/>
<rect x="636" y="427" width="1" height="1" fill="#fff"/>
<rect x="642" y="427" width="1" height="1" fill="#fff"/>
<rect x="648" y="427" width="1" height="1" fill="#fff"/>
<rect x="654" y="427" width="1" height="1" fill="#fff"/>
<rect x="660" y="427" width="1" height="1" fill="#fff"/>
<rect x="666" y="427" width="1" height="1" fill="#fff"/>
<rect x="114" y="439" width="1" height="1" fill="#fff"/>
<rect x="120" y="439" width="1" height="1" fill="#fff"/>
<rect x="126" y="439" width="1" height="1" fill="#fff"/>
<rect x="132" y="439" width="1" height="1" fill="#fff"/>
<rect x="138" y="439" width="1" height="1" fill="#fff"/>
<rect x="144" y="439" width="1" height="1" fill="#fff"/>
<rect x="150" y="439" width="1" height="1" fill="#fff"/>
<rect x="156" y="439" width="1" height="1" fill="#fff"/>
<rect x="162" y="439" width="1" height="1" fill="#fff"/>
<rect x="168" y="439" width="1" height="1" fill="#fff"/>
<rect x="174" y="439" width="1" height="1" fill="#fff"/>
<rect x="180" y="439" width="1" height="1" fill="#fff"/>
<rect x="186" y="439" width="1" height="1" fill="#fff"/>
<rect x="192" y="439" width="1" height="1" fill="#fff"/>
<rect x="198" y="439" width="1" height="1" fill="#fff"/>
<rect x="204" y="439" width="1" height="1" fill="#fff"/>
<rect x="210" y="439" width="1" height="1" fill="#fff"/>
<rect x="216" y="439" width="1" height="1" fill="#fff"/>
<rect x="222" y="439" width="1" height="1" fill="#fff"/>
<rect x="228" y="439" width="1" height="1" fill="#fff"/>
<rect x="234" y="439" width="1" height="1" fill="#fff"/>
<rect x="240" y="439" width="1" height="1" fill="#fff"/>
<rect x="246" y="439" width="1" height="1" fill="#fff"/>
<rect x="252" y="439" width="1" height="1" fill="#fff"/>
<rect x="258" y="439" width="1" height="1" fill="#fff"/>
<rect x="264" y="439" width="1" height="1" fill="#fff"/>
<rect x="270" y="439" width="1" height="1" fill="#fff"/>
<rect x="276" y="439" width="1" height="1" fill="#fff"/>
<rect x="282" y="439" width="1" height="1" fill="#fff"/>
<rect x="288" y="439" width="1" height="1" fill="#fff"/>
<rect x="294" y="439" width="1" height="1" fill="#fff"/>
<rect x="300" y="439" width="1" height="1" fill="#fff"/>
<rect x="306" y="439" width="1" height="1" fill="#fff"/>
<rect x="312" y="439" width="1" height="1" fill="#fff"/>
<rect x="318" y="439" width="1" height="1" fill="#fff"/>
<rect x="324" y="439" width="1" height="1" fill="#fff"/>
<rect x="330" y="439" width="1" height="1" fill="#fff"/>
<rect x="336" y="439" width="1" height="1" fill="#fff"/>
<rect x="342" y="439" width="1" height="1" fill="#fff"/>
<rect x="348" y="439" width="1" height="1" fill="#fff"/>
<rect x="354" y="439" width="1" height="1" fill="#fff"/>
<rect x="360" y="439" width="1" height="1" fill="#fff"/>
<rect x="366" y="439" width="1" height="1" fill="#fff"/>
<rect x="372" y="439" width="1" height="1" fill="#fff"/>
<rect x="378" y="439" width="1" height="1" fill="#fff"/>
<rect x="384" y="439" width="1" height="1" fill="#fff"/>
<rect x="390" y="439" width="1" height="1" fill="#fff"/>
<rect x="396" y="439" width="1" height="1" fill="#fff"/>
<rect x="402" y="439" width="1" height="1" fill="#fff"/>
<rect x="408" y="439" width="1" height="1" fill="#fff"/>
<rect x="414" y="439" width="1" height="1" fill="#fff"/>
<rect x="420" y="439" width="1" height="1" fill="#fff"/>
<rect x="426" y="439" width="1" height="1" fill="#fff"/>
<rect x="432" y="439" width="1" height="1" fill="#fff"/>
<rect x="438" y="439" width="1" height="1" fill="#fff"/>
<rect x="444" y="439" width="1" height="1" fill="#fff"/>
<rect x="450" y="439" width="1" height="1" fill="#fff"/>
<rect x="456" y="439" width="1" height="1" fill="#fff"/>
<rect x="462" y="439" width="1" height="1" fill="#fff"/>
<rect x="468" y="439" width="1" height="1" fill="#fff"/>
<rect x="474" y="439" width="1" height="1" fill="#fff"/>
<rect x="480" y="439" width="1" height="1" fill="#fff"/>
<rect x="486" y="439" width="1" height="1" fill="#fff"/>
<rect x="492" y="439" width="1" height="1" fill="#fff"/>
<rect x="498" y="439" width="1" height="1" fill="#fff"/>
<rect x="504" y="439" width="1" height="1" fill="#fff"/>
<rect x="510" y="439" width="1" height="1" fill="#fff"/>
<rect x="516" y="439" width="1" height="1" fill="#fff"/>
<rect x="522" y="439" width="1" height="1" fill="#fff"/>
<rect x="528" y="439" width="1" height="1" fill="#fff"/>
<rect x="534" y="439" width="1" height="1" fill="#fff"/>
<rect x="540" y="439" width="1" height="1" fill="#fff"/>
<rect x="546" y="439" width="1" height="1" fill="#fff"/>
<rect x="552" y="439" width="1" height="1" fill="#fff"/>
<rect x="558" y="439" width="1" height="1" fill="#fff"/>
<rect x="564" y="439" width="1" height="1" fill="#fff"/>
<rect x="570" y="439" width="1" height="1" fill="#fff"/>
<rect x="576" y="439" width="1" height="1" fill="#fff"/>
<rect x="582" y="439" width="1" height="1" fill="#fff"/>
<rect x="588" y="439" width="1" height="1" fill="#fff"/>
<rect x="594" y="439" width="1" height="1" fill="#fff"/>
<rect x="600" y="439" width="1" height="1" fill="#fff"/>
<rect x="606" y="439" width="1" height="1" fill="#fff"/>
<rect x="612" y="439" width="1" height="1" fill="#fff"/>
<rect x="618" y="439" width="1" height="1" fill="#fff"/>
<rect x="624" y="439" width="1" height="1" fill="#fff"/>
<rect x="630" y="439" width="1" height="1" fill="#fff"/>
<rect x="636" y="439" width="1" height="1" fill="#fff"/>
<rect x="642" y="439" width="1" height="1" fill="#fff"/>
<rect x="648" y="439" width="1" height="1" fill="#fff"/>
<rect x="654" y="439" width="1" height="1" fill="#fff"/>
<rect x="660" y="439" width="1" height="1" fill="#fff"/>
<rect x="666" y="439" width="1" height="1" fill="#fff"/>
<rect x="114" y="472" width="1" height="1" fill="#fff"/>
<rect x="120" y="472" width="1" height="1" fill="#fff"/>
<rect x="126" y="472" width="1" height="1" fill="#fff"/>
<rect x="132" y="472" width="1" height="1" fill="#fff"/>
<rect x="138" y="472" width="1" height="1" fill="#fff"/>
<rect x="144" y="472" width="1" height="1" fill="#fff"/>
<rect x="150" y="472" width="1" height="1" fill="#fff"/>
<rect x="156" y="472" width="1" height="1" fill="#fff"/>
<rect x="162" y="472" width="1" height="1" fill="#fff"/>
<rect x="168" y="472" width="1" height="1" fill="#fff"/>
<rect x="174" y="472" width="1" height="1" fill="#fff"/>
<rect x="180" y="472" width="1" height="1" fill="#fff"/>
<rect x="186" y="472" width="1" height="1" fill="#fff"/>
<rect x="192" y="472" width="1" height="1" fill="#fff"/>
<rect x="198" y="472" width="1" height="1" fill="#fff"/>
<rect x="204" y="472" width="1" height="1" fill="#fff"/>
<rect x="210" y="472" width="1" height="1" fill="#fff"/>
<rect x="216" y="472" width="1" height="1" fill="#fff"/>
<rect x="222" y="472" width="1" height="1" fill="#fff"/>
<rect x="228" y="472" width="1" height="1" fill="#fff"/>
<rect x="234" y="472" width="1" height="1" fill="#fff"/>
<rect x="240" y="472" width="1" height="1" fill="#fff"/>
<rect x="246" y="472" width="1" height="1" fill="#fff"/>
<rect x="252" y="472" width="1" height="1" fill="#fff"/>
<rect x="258" y="472" width="1" height="1" fill="#fff"/>
<rect x="264" y="472" width="1" height="1" fill="#fff"/>
<rect x="270" y="472" width="1" height="1" fill="#fff"/>
<rect x="276" y="472" width="1" height="1" fill="#fff"/>
<rect x="282" y="472" width="1" height="1" fill="#fff"/>
<rect x="288" y="472" width="1" height="1" fill="#fff"/>
<rect x="294" y="472" width="1" height="1" fill="#fff"/>
<rect x="300" y="472" width="1" height="1" fill="#fff"/>
<rect x="306" y="472" width="1" height="1" fill="#fff"/>
<rect x="312" y="472" width="1" height="1" fill="#fff"/>
<rect x="318" y="472" width="1" height="1" fill="#fff"/>
<rect x="324" y="472" width="1" height="1" fill="#fff"/>
<rect x="330" y="472" width="1" height="1" fill="#fff"/>
<rect x="336" y="472" width="1" height="1" fill="#fff"/>
<rect x="342" y="472" width="1" height="1" fill="#fff"/>
<rect x="348" y="472" width="1" height="1" fill="#fff"/>
<rect x="354" y="472" width="1" height="1" fill="#fff"/>
<rect x="360" y="472" width="1" height="1" fill="#fff"/>
<rect x="366" y="472" width="1" height="1" fill="#fff"/>
<rect x="372" y="472" width="1" height="1" fill="#fff"/>
<rect x="378" y="472" width="1" height="1" fill="#fff"/>
<rect x="384" y="472" width="1" height="1" fill="#fff"/>
<rect x="390" y="472" width="1" height="1" fill="#fff"/>
<rect x="396" y="472" width="1" height="1" fill="#fff"/>
<rect x="402" y="472" width="1" height="1" fill="#fff"/>
<rect x="408" y="472" width="1" height="1" fill="#fff"/>
<rect x="414" y="472" width="1" height="1" fill="#fff"/>
<rect x="420" y="472" width="1" height="1" fill="#fff"/>
<rect x="426" y="472" width="1" height="1" fill="#fff"/>
<rect x="432" y="472" width="1" height="1" fill="#fff"/>
<rect x="438" y="472" width="1" height="1" fill="#fff"/>
<rect x="444" y="472" width="1" height="1" fill="#fff"/>
<rect x="450" y="472" width="1" height="1" fill="#fff"/>
<rect x="456" y="472" width="1" height="1" fill="#fff"/>
<rect x="462" y="472" width="1" height="1" fill="#fff"/>
<rect x="468" y="472" width="1" height="1" fill="#fff"/>
<rect x="474" y="472" width="1" height="1" fill="#fff"/>
<rect x="480" y="472" width="1" height="1" fill="#fff"/>
<rect x="486" y="472" width="1" height="1" fill="#fff"/>
<rect x="492" y="472" width="1" height="1" fill="#fff"/>
<rect x="498" y="472" width="1" height="1" fill="#fff"/>
<rect x="504" y="472" width="1" height="1" fill="#fff"/>
<rect x="510" y="472" width="1" height="1" fill="#fff"/>
<rect x="516" y="472" width="1" height="1" fill="#fff"/>
<rect x="522" y="472" width="1" height="1" fill="#fff"/>
<rect x="528" y="472" width="1" height="1" fill="#fff"/>
<rect x="534" y="472" width="1" height="1" fill="#fff"/>
<rect x="540" y="472" width="1" height="1" fill="#fff"/>
<rect x="546" y="472" width="1" height="1" fill="#fff"/>
<rect x="552" y="472" width="1" height="1" fill="#fff"/>
<rect x="558" y="472" width="1" height="1" fill="#fff"/>
<rect x="564" y="472" width="1" height="1" fill="#fff"/>
<rect x="570" y="472" width="1" height="1" fill="#fff"/>
<rect x="576" y="472" width="1" height="1" fill="#fff"/>
<rect x="582" y="472" width="1" height="1" fill="#fff"/>
<rect x="588" y="472" width="1" height="1" fill="#fff"/>
<rect x="594" y="472" width="1" height="1" fill="#fff"/>
<rect x="600" y="472" width="1" height="1" fill="#fff"/>
<rect x="606" y="472" width="1" height="1" fill="#fff"/>
<rect x="612" y="472" width="1" height="1" fill="#fff"/>
<rect x="618" y="472" width="1" height="1" fill="#fff"/>
<rect x="624" y="472" width="1" height="1" fill="#fff"/>
<rect x="630" y="472" width="1" height="1" fill="#fff"/>
<rect x="636" y="472" width="1" height="1" fill="#fff"/>
<rect x="642" y="472" width="1" height="1" fill="#fff"/>
<rect x="648" y="472" width="1" height="1" fill="#fff"/>
<rect x="654" y="472" width="1" height="1" fill="#fff"/>
<rect x="660" y="472" width="1" height="1" fill="#fff"/>
<rect x="666" y="472" width="1" height="1" fill="#fff"/>
<rect x="116" y="19" width="1" height="11" fill="#fff"/>
<rect x="116" y="474" width="1" height="9" fill="#fff"/>
<rect x="145" y="19" width="1" height="6" fill="#fff"/>
<rect x="145" y="479" width="1" height="4" fill="#fff"/>
<rect x="174" y="19" width="1" height="6" fill="#fff"/>
<rect x="174" y="479" width="1" height="4" fill="#fff"/>
<rect x="204" y="19" width="1" height="6" fill="#fff"/>
<rect x="204" y="479" width="1" height="4" fill="#fff"/>
<rect x="233" y="19" width="1" height="11" fill="#fff"/>
<rect x="233" y="474" width="1" height="9" fill="#fff"/>
<rect x="262" y="19" width="1" height="6" fill="#fff"/>
<rect x="262" y="479" width="1" height="4" fill="#fff"/>
<rect x="292" y="19" width="1" height="6" fill="#fff"/>
<rect x="292" y="479" width="1" height="4" fill="#fff"/>
<rect x="321" y="19" width="1" height="6" fill="#fff"/>
<rect x="321" y="479" width="1" height="4" fill="#fff"/>
<rect x="350" y="19" width="1" height="11" fill="#fff"/>
<rect x="350" y="474" width="1" height="9" fill="#fff"/>
<rect x="380" y="19" width="1" height="6" fill="#fff"/>
<rect x="380" y="479" width="1" height="4" fill="#fff"/>
<rect x="409" y="19" width="1" height="6" fill="#fff"/>
<rect x="409" y="479" width="1" height="4" fill="#fff"/>
<rect x="438" y="19" width="1" height="6" fill="#fff"/>
<rect x="438" y="479" width="1" height="4" fill="#fff"/>
<rect x="468" y="19" width="1" height="11" fill="#fff"/>
<rect x="468" y="474" width="1" height="9" fill="#fff"/>
<rect x="497" y="19" width="1" height="6" fill="#fff"/>
<rect x="497" y="479" width="1" height="4" fill="#fff"/>
<rect x="526" y="19" width="1" height="6" fill="#fff"/>
<rect x="526" y="479" width="1" height="4" fill="#fff"/>
<rect x="556" y="19" width="1" height="6" fill="#fff"/>
<rect x="556" y="479" width="1" height="4" fill="#fff"/>
<rect x="585" y="19" width="1" height="11" fill="#fff"/>
<rect x="585" y="474" width="1" height="9" fill="#fff"/>
<rect x="614" y="19" width="1" height="6" fill="#fff"/>
<rect x="614" y="479" width="1" height="4" fill="#fff"/>
<rect x="644" y="19" width="1" height="6" fill="#fff"/>
<rect x="644" y="479" width="1" height="4" fill="#fff"/>
<rect x="108" y="472" width="15" height="12" fill="#fff"/>
<rect x="121" y="467" width="1" height="6" fill="#fff"/>
<rect x="123" y="483" width="549" height="1" fill="#f00000"/>
<rect x="149" y="481" width="1" height="2" fill="#fff"/>
<rect x="150" y="478" width="1" height="6" fill="#fff"/>
<rect x="151" y="480" width="1" height="3" fill="#fff"/>
<rect x="152" y="480" width="1" height="3" fill="#fff"/>
<rect x="153" y="480" width="1" height="3" fill="#fff"/>
<rect x="154" y="480" width="1" height="3" fill="#fff"/>
<rect x="155" y="480" width="1" height="4" fill="#fff"/>
<rect x="156" y="477" width="1" height="7" fill="#fff"/>
<rect x="157" y="480" width="1" height="4" fill="#fff"/>
<rect x="158" y="480" width="1" height="4" fill="#fff"/>
<rect x="159" y="481" width="1" height="2" fill="#fff"/>
<rect x="160" y="480" width="1" height="3" fill="#fff"/>
<rect x="161" y="478" width="1" height="6" fill="#fff"/>
<rect x="162" y="477" width="1" height="7" fill="#fff"/>
<rect x="234" y="480" width="1" height="3" fill="#fff"/>
<rect x="235" y="480" width="1" height="3" fill="#fff"/>
<rect x="236" y="480" width="1" height="3" fill="#fff"/>
<rect x="237" y="480" width="1" height="4" fill="#fff"/>
<rect x="238" y="477" width="1" height="7" fill="#fff"/>
<rect x="239" y="480" width="1" height="3" fill="#fff"/>
<rect x="240" y="481" width="1" height="3" fill="#fff"/>
<rect x="241" y="481" width="1" height="3" fill="#fff"/>
<rect x="242" y="482" width="1" height="1" fill="#fff"/>
<rect x="243" y="482" width="1" height="1" fill="#fff"/>
<rect x="244" y="478" width="1" height="6" fill="#fff"/>
<rect x="245" y="481" width="1" height="3" fill="#fff"/>
<rect x="246" y="481" width="1" height="2" fill="#fff"/>
<rect x="247" y="480" width="1" height="3" fill="#fff"/>
<rect x="248" y="480" width="1" height="3" fill="#fff"/>
<rect x="249" y="479" width="1" height="5" fill="#fff"/>
<rect x="250" y="477" width="1" height="7" fill="#fff"/>
<rect x="251" y="480" width="1" height="3" fill="#fff"/>
<rect x="252" y="480" width="1" height="3" fill="#fff"/>
<rect x="253" y="480" width="1" height="3" fill="#fff"/>
<rect x="254" y="481" width="1" height="2" fill="#fff"/>
<rect x="279" y="482" width="1" height="1" fill="#fff"/>
<rect x="280" y="480" width="1" height="3" fill="#fff"/>
<rect x="281" y="481" width="1" height="2" fill="#fff"/>
<rect x="282" y="480" width="1" height="3" fill="#fff"/>
<rect x="283" y="480" width="1" height="3" fill="#fff"/>
<rect x="284" y="480" width="1" height="4" fill="#fff"/>
<rect x="285" y="477" width="1" height="7" fill="#fff"/>
<rect x="286" y="481" width="1" height="2" fill="#fff"/>
<rect x="287" y="482" width="1" height="2" fill="#fff"/>
<rect x="288" y="477" width="1" height="7" fill="#fff"/>
<rect x="289" y="476" width="1" height="8" fill="#fff"/>
<rect x="290" y="480" width="1" height="4" fill="#fff"/>
<rect x="291" y="481" width="1" height="2" fill="#fff"/>
<rect x="292" y="479" width="1" height="4" fill="#fff"/>
<rect x="374" y="482" width="1" height="1" fill="#fff"/>
<rect x="375" y="480" width="1" height="3" fill="#fff"/>
<rect x="376" y="480" width="1" height="3" fill="#fff"/>
<rect x="377" y="480" width="1" height="3" fill="#fff"/>
<rect x="378" y="480" width="1" height="4" fill="#fff"/>
<rect x="379" y="477" width="1" height="7" fill="#fff"/>
<rect x="380" y="479" width="1" height="4" fill="#fff"/>
<rect x="381" y="480" width="1" height="3" fill="#fff"/>
<rect x="382" y="480" width="1" height="3" fill="#fff"/>
<rect x="383" y="480" width="1" height="3" fill="#fff"/>
<rect x="384" y="478" width="1" height="6" fill="#fff"/>
<rect x="385" y="477" width="1" height="7" fill="#fff"/>
<rect x="386" y="480" width="1" height="3" fill="#fff"/>
<rect x="387" y="480" width="1" height="4" fill="#fff"/>
<rect x="388" y="480" width="1" height="3" fill="#fff"/>
<rect x="389" y="479" width="1" height="5" fill="#fff"/>
<rect x="390" y="478" width="1" height="5" fill="#fff"/>
<rect x="391" y="477" width="1" height="7" fill="#fff"/>
<rect x="392" y="482" width="1" height="2" fill="#fff"/>
<rect x="393" y="482" width="1" height="2" fill="#fff"/>
<rect x="394" y="476" width="1" height="8" fill="#fff"/>
<rect x="395" y="478" width="1" height="6" fill="#fff"/>
<rect x="396" y="478" width="1" height="6" fill="#fff"/>
<rect x="397" y="479" width="1" height="4" fill="#fff"/>
<rect x="398" y="480" width="1" height="3" fill="#fff"/>
<rect x="399" y="480" width="1" height="3" fill="#fff"/>
<rect x="400" y="480" width="1" height="3" fill="#fff"/>
<rect x="401" y="477" width="1" height="7" fill="#fff"/>
<rect x="402" y="478" width="1" height="6" fill="#fff"/>
<rect x="403" y="480" width="1" height="4" fill="#fff"/>
<rect x="404" y="480" width="1" height="4" fill="#fff"/>
<rect x="405" y="480" width="1" height="3" fill="#fff"/>
<rect x="406" y="480" width="1" height="4" fill="#fff"/>
<rect x="407" y="480" width="1" height="4" fill="#fff"/>
<rect x="408" y="477" width="1" height="7" fill="#fff"/>
<rect x="409" y="479" width="1" height="4" fill="#fff"/>
<rect x="410" y="480" width="1" height="3" fill="#fff"/>
<rect x="411" y="480" width="1" height="3" fill="#fff"/>
<rect x="412" y="480" width="1" height="3" fill="#fff"/>
<rect x="413" y="481" width="1" height="3" fill="#fff"/>
<rect x="416" y="480" width="1" height="3" fill="#fff"/>
<rect x="417" y="480" width="1" height="3" fill="#fff"/>
<rect x="418" y="480" width="1" height="3" fill="#fff"/>
<rect x="419" y="480" width="1" height="4" fill="#fff"/>
<rect x="420" y="477" width="1" height="7" fill="#fff"/>
<rect x="421" y="480" width="1" height="3" fill="#fff"/>
<rect x="422" y="480" width="1" height="3" fill="#fff"/>
<rect x="423" y="480" width="1" height="3" fill="#fff"/>
<rect x="424" y="479" width="1" height="4" fill="#fff"/>
<rect x="425" y="478" width="1" height="6" fill="#fff"/>
<rect x="426" y="477" width="1" height="7" fill="#fff"/>
<rect x="427" y="482" width="1" height="1" fill="#fff"/>
<rect x="428" y="477" width="1" height="7" fill="#fff"/>
<rect x="429" y="476" width="1" height="8" fill="#fff"/>
<rect x="430" y="478" width="1" height="6" fill="#fff"/>
<rect x="431" y="480" width="1" height="4" fill="#fff"/>
<rect x="501" y="481" width="1" height="2" fill="#fff"/>
<rect x="502" y="478" width="1" height="6" fill="#fff"/>
<rect x="503" y="480" width="1" height="3" fill="#fff"/>
<rect x="504" y="480" width="1" height="3" fill="#fff"/>
<rect x="505" y="480" width="1" height="3" fill="#fff"/>
<rect x="506" y="480" width="1" height="3" fill="#fff"/>
<rect x="507" y="480" width="1" height="4" fill="#fff"/>
<rect x="508" y="477" width="1" height="7" fill="#fff"/>
<rect x="509" y="480" width="1" height="4" fill="#fff"/>
<rect x="510" y="480" width="1" height="4" fill="#fff"/>
<rect x="511" y="481" width="1" height="2" fill="#fff"/>
<rect x="512" y="480" width="1" height="3" fill="#fff"/>
<rect x="513" y="478" width="1" height="6" fill="#fff"/>
<rect x="514" y="477" width="1" height="7" fill="#fff"/>
<rect x="515" y="482" width="1" height="1" fill="#fff"/>
<rect x="516" y="482" width="1" height="2" fill="#fff"/>
<rect x="517" y="476" width="1" height="8" fill="#fff"/>
<rect x="518" y="477" width="1" height="7" fill="#fff"/>
<rect x="519" y="478" width="1" height="6" fill="#fff"/>
<rect x="520" y="477" width="1" height="6" fill="#fff"/>
<rect x="521" y="479" width="1" height="5" fill="#fff"/>
<rect x="522" y="480" width="1" height="3" fill="#fff"/>
<rect x="523" y="480" width="1" height="3" fill="#fff"/>
<rect x="524" y="482" width="1" height="1" fill="#fff"/>
<rect x="556" y="479" width="1" height="4" fill="#fff"/>
<rect x="557" y="481" width="1" height="2" fill="#fff"/>
<rect x="558" y="480" width="1" height="4" fill="#fff"/>
<rect x="559" y="480" width="1" height="3" fill="#fff"/>
<rect x="560" y="478" width="1" height="6" fill="#fff"/>
<rect x="561" y="477" width="1" height="6" fill="#fff"/>
<rect x="562" y="480" width="1" height="4" fill="#fff"/>
<rect x="563" y="480" width="1" height="3" fill="#fff"/>
<rect x="564" y="480" width="1" height="4" fill="#fff"/>
<rect x="565" y="479" width="1" height="4" fill="#fff"/>
<rect x="566" y="478" width="1" height="6" fill="#fff"/>
<rect x="567" y="477" width="1" height="6" fill="#fff"/>
<rect x="568" y="481" width="1" height="3" fill="#fff"/>
<rect x="569" y="482" width="1" height="2" fill="#fff"/>
<rect x="570" y="476" width="1" height="8" fill="#fff"/>
<rect x="571" y="478" width="1" height="6" fill="#fff"/>
<rect x="572" y="478" width="1" height="6" fill="#fff"/>
<rect x="573" y="477" width="1" height="6" fill="#fff"/>
<rect x="574" y="479" width="1" height="4" fill="#fff"/>
<rect x="575" y="480" width="1" height="3" fill="#fff"/>
<rect x="576" y="480" width="1" height="3" fill="#fff"/>
<rect x="577" y="478" width="1" height="5" fill="#fff"/>
<rect x="578" y="477" width="1" height="7" fill="#fff"/>
<rect x="579" y="479" width="1" height="5" fill="#fff"/>
<rect x="580" y="481" width="1" height="2" fill="#fff"/>
<rect x="647" y="480" width="12" height="3" fill="#fff"/>
<rect x="648" y="483" width="10" height="1" fill="#fff"/>
<rect x="108" y="19" width="564" height="1" fill="#fff"/>
<rect x="108" y="19" width="1" height="465" fill="#fff"/>
<rect x="671" y="19" width="1" height="465" fill="#fff"/>
<g font-family="'Liberation Sans', sans-serif" opacity="0.999" text-rendering="geometricPrecision">
<text transform="scale(1.12,1)" x="88.08 95.16 102.11 105.76 112.83" y="14" font-size="11.9" fill="#fff" stroke="#fff" stroke-width="0.3">20:00</text>
<text transform="scale(1.12,1)" x="88.08 95.16 102.11 105.76 112.83" y="502" font-size="11.9" fill="#fff" stroke="#fff" stroke-width="0.3">20:00</text>
<text transform="scale(1.12,1)" x="192.73 199.8 206.76 210.41 217.48" y="14" font-size="11.9" fill="#fff" stroke="#fff" stroke-width="0.3">16:00</text>
<text transform="scale(1.12,1)" x="192.73 199.8 206.76 210.41 217.48" y="502" font-size="11.9" fill="#fff" stroke="#fff" stroke-width="0.3">16:00</text>
<text transform="scale(1.12,1)" x="297.37 304.44 311.4 315.05 322.12" y="14" font-size="11.9" fill="#fff" stroke="#fff" stroke-width="0.3">12:00</text>
<text transform="scale(1.12,1)" x="297.37 304.44 311.4 315.05 322.12" y="502" font-size="11.9" fill="#fff" stroke="#fff" stroke-width="0.3">12:00</text>
<text transform="scale(1.12,1)" x="402.01 409.08 416.04 419.69 426.76" y="14" font-size="11.9" fill="#fff" stroke="#fff" stroke-width="0.3">08:00</text>
<text transform="scale(1.12,1)" x="402.01 409.08 416.04 419.69 426.76" y="502" font-size="11.9" fill="#fff" stroke="#fff" stroke-width="0.3">08:00</text>
<text transform="scale(1.12,1)" x="506.66 513.73 520.69 524.33 531.41" y="14" font-size="11.9" fill="#fff" stroke="#fff" stroke-width="0.3">04:00</text>
<text transform="scale(1.12,1)" x="506.66 513.73 520.69 524.33 531.41" y="502" font-size="11.9" fill="#fff" stroke="#fff" stroke-width="0.3">04:00</text>
<text transform="scale(1.05,1)" x="292.8 300.1 307.41 314.71 324.12 330.05 337.35 346.76 352.69 360.0 368.31 373.15 380.45 387.67 391.41 398.71 405.93 409.67 416.98 424.19 427.93 435.24 442.54" y="518" font-size="12.5" fill="#fff" stroke="#fff" stroke-width="0.3">2010/07/29 18:36:00.000</text>
<text transform="scale(0.95,1)" x="17.94 24.62 36.17 41.0 49.13 58.16 66.2 75.83 84.86 93.28" y="61.9" font-size="12.5" fill="#fff" stroke="#fff" stroke-width="0.3">TM SUBMODE</text>
<text transform="scale(0.95,1)" x="7.32 13.7 21.37 29.3 37.63 49.63 55.48 63.36 66.12 74.66 80.37 84.86 94.23 103.38" y="108.9" font-size="12.5" fill="#fff" stroke="#fff" stroke-width="0.3">LASCO/EIT (OP)</text>
<text x="47.56 56.3 64.28 71.57 79.24 86.91 94.58" y="154.6" font-size="12.5" fill="#fff" stroke="#fff" stroke-width="0.3">OS_3342</text>
<text x="47.56 56.3 64.28 71.57 79.24 86.91 94.58" y="189.7" font-size="12.5" fill="#fff" stroke="#fff" stroke-width="0.3">OS_3361</text>
<text x="47.56 56.3 64.28 71.57 79.24 86.91 94.58" y="224.8" font-size="12.5" fill="#fff" stroke="#fff" stroke-width="0.3">OS_3387</text>
<text x="47.56 56.3 64.28 71.57 79.24 86.91 94.58" y="259.9" font-size="12.5" fill="#fff" stroke="#fff" stroke-width="0.3">OS_3389</text>
<text x="47.56 56.3 64.28 71.57 79.24 86.91 94.58" y="295.0" font-size="12.5" fill="#fff" stroke="#fff" stroke-width="0.3">OS_3390</text>
<text x="47.56 56.3 64.28 71.57 79.24 86.91 94.58" y="330.1" font-size="12.5" fill="#fff" stroke="#fff" stroke-width="0.3">OS_3406</text>
<text x="47.56 56.3 64.28 71.57 79.24 86.91 94.58" y="365.2" font-size="12.5" fill="#fff" stroke="#fff" stroke-width="0.3">OS_3532</text>
<text x="47.56 56.3 64.28 71.57 79.24 86.91 94.58" y="400.3" font-size="12.5" fill="#fff" stroke="#fff" stroke-width="0.3">OS_3654</text>
<text transform="scale(0.95,1)" x="8.06 14.43 22.1 30.03 38.36 50.83 58.52 66.19 74.19 79.03 83.35 91.0" y="452.3" font-size="12.5" fill="#fff" stroke="#fff" stroke-width="0.3">LASCO-buffer</text>
<text transform="scale(1.12,1)" x="89.76" y="38.2" font-size="11.9" fill="#fff" stroke="#fff" stroke-width="0.3">5</text>
<text transform="scale(1.12,1)" x="89.76" y="47.6" font-size="11.9" fill="#fff" stroke="#fff" stroke-width="0.3">4</text>
<text transform="scale(1.12,1)" x="89.76" y="57" font-size="11.9" fill="#fff" stroke="#fff" stroke-width="0.3">3</text>
<text transform="scale(1.12,1)" x="89.76" y="66.3" font-size="11.9" fill="#fff" stroke="#fff" stroke-width="0.3">2</text>
<text transform="scale(1.12,1)" x="89.76" y="75.6" font-size="11.9" fill="#fff" stroke="#fff" stroke-width="0.3">1</text>
<text transform="scale(1.12,1)" x="75.62 82.69 89.76" y="431" font-size="11.9" fill="#fff" stroke="#fff" stroke-width="0.3">100</text>
<text transform="scale(1.12,1)" x="82.69 89.76" y="443.5" font-size="11.9" fill="#fff" stroke="#fff" stroke-width="0.3">80</text>
<text transform="scale(1.12,1)" x="82.69 89.76" y="476.6" font-size="11.9" fill="#fff" stroke="#fff" stroke-width="0.3">20</text>
<text transform="scale(1.12,1)" x="89.76" y="488" font-size="11.9" fill="#fff" stroke="#fff" stroke-width="0.3">0</text>
<text x="13.24 20.27" y="519.6" font-size="9.31" fill="#ff0000" stroke="#ff0000" stroke-width="0.5">C1</text>
<text x="34.44 41.47" y="519.6" font-size="9.31" fill="#00ff00" stroke="#00ff00" stroke-width="0.5">C2</text>
<text x="55.44 62.47" y="519.6" font-size="9.31" fill="#96e6f0" stroke="#96e6f0" stroke-width="0.5">C3</text>
<text x="76.39 82.32 84.43" y="519.6" font-size="9.31" fill="#ffff00" stroke="#ffff00" stroke-width="0.5">EIT</text>
</g>
</svg>
</body></html>
